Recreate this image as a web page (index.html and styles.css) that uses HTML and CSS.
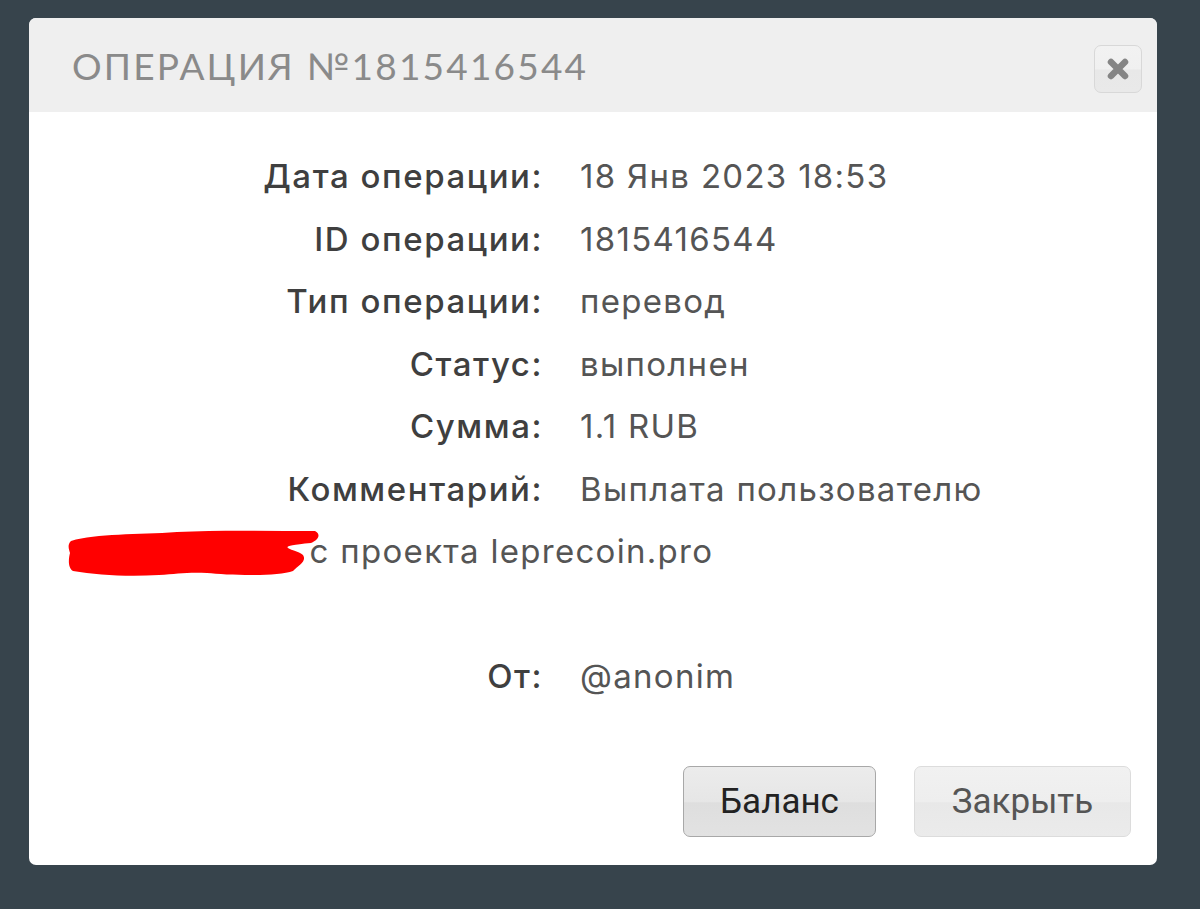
FILE: index.html
```html
<!DOCTYPE html>
<html lang="ru">
<head>
<meta charset="utf-8">
<link rel="stylesheet" href="styles.css">
</head>
<body>
<div class="modal">
  <div class="modal-header">
    <h1 class="title">ОПЕРАЦИЯ №1815416544</h1>
    <button class="close-btn" aria-label="close">
      <svg width="26" height="26" viewBox="0 0 26 26"><path d="M6 6 L20 20 M20 6 L6 20" stroke="#858585" stroke-width="6.5" stroke-linecap="round"/></svg>
    </button>
  </div>
  <div class="modal-body">
    <div class="row"><span class="label">Дата операции:</span><span class="value">18 Янв 2023 18:53</span></div>
    <div class="row"><span class="label">ID операции:</span><span class="value">1815416544</span></div>
    <div class="row"><span class="label">Тип операции:</span><span class="value">перевод</span></div>
    <div class="row"><span class="label">Статус:</span><span class="value">выполнен</span></div>
    <div class="row"><span class="label">Сумма:</span><span class="value">1.1 RUB</span></div>
    <div class="row"><span class="label">Комментарий:</span><span class="value">Выплата пользователю <svg class="redact" width="254" height="52" viewBox="0 0 254 52"><path d="M4 14 C30 6 70 8 110 5 C150 3 200 4 248 4 C254 7 252 13 244 16 C200 20 230 22 236 28 C240 34 232 38 226 44 C210 50 160 48 140 46 C120 45 110 47 92 48 C60 50 30 48 6 44 C0 40 2 30 3 26 C2 22 0 18 4 14 Z" fill="#ff0000"/></svg> с проекта leprecoin.pro</span></div>
    <div class="row empty"></div>
    <div class="row"><span class="label">От:</span><span class="value">@anonim</span></div>
  </div>
  <div class="modal-footer">
    <button class="btn btn-primary">Баланс</button>
    <button class="btn btn-secondary">Закрыть</button>
  </div>
</div>
</body>
</html>
```

FILE: styles.css
```css
html, body {
  margin: 0;
  padding: 0;
  background: #37444c;
  height: 100%;
}
body {
  padding: 18px 43px 0 29px;
  box-sizing: border-box;
  font-family: "Inter", "Noto Sans", sans-serif;
}
.modal {
  width: 1128px;
  height: 847px;
  background: #fff;
  border-radius: 7px;
  overflow: hidden;
  display: flex;
  flex-direction: column;
}
.modal-header {
  height: 94px;
  background: #efefef;
  display: flex;
  align-items: center;
  justify-content: space-between;
  padding: 0 15px 0 43px;
  box-sizing: border-box;
  flex-shrink: 0;
}
.title {
  margin: 0;
  font-family: "Lato", sans-serif;
  font-weight: 400;
  font-size: 37px;
  letter-spacing: 2.2px;
  color: #8a8a8a;
}
.close-btn {
  width: 48px;
  height: 48px;
  border: 1px solid #d8d8d8;
  border-radius: 7px;
  background: linear-gradient(#f2f2f2, #f0f0f0 50%, #e8e8e8 52%, #e9e9e9);
  display: flex;
  align-items: center;
  justify-content: center;
  padding: 0;
  margin-top: 8px;
}
.modal-body {
  padding: 33px 41px 0 41px;
  flex: 1;
}
.row {
  font-size: 33px;
  line-height: 62.5px;
  color: #4e4e4e;
}
.row.empty { height: 62.5px; }
.label {
  display: inline-block;
  width: 473px;
  text-align: right;
  font-weight: 500;
  color: #3f3f3f;
  margin-right: 37px;
  letter-spacing: 1.55px;
}
.value {
  font-weight: 400;
  color: #555;
  letter-spacing: 1.3px;
}
.redact {
  vertical-align: -16px;
  margin-left: -3px;
  margin-right: -22px;
}
.modal-footer {
  display: flex;
  justify-content: flex-end;
  gap: 38px;
  padding: 0 26px 28px 0;
}
.btn {
  height: 71px;
  border-radius: 7px;
  font-family: "Roboto", sans-serif;
  font-size: 35px;
  padding: 0;
}
.btn-primary {
  width: 193px;
  border: 1px solid #a8a8a8;
  background: linear-gradient(#ececec, #e6e6e6 50%, #dedede 52%, #e2e2e2);
  color: #222;
}
.btn-secondary {
  width: 217px;
  border: 1px solid #dcdcdc;
  background: linear-gradient(#f1f1f1, #eeeeee 50%, #e8e8e8 52%, #ebebeb);
  color: #555;
}
```
